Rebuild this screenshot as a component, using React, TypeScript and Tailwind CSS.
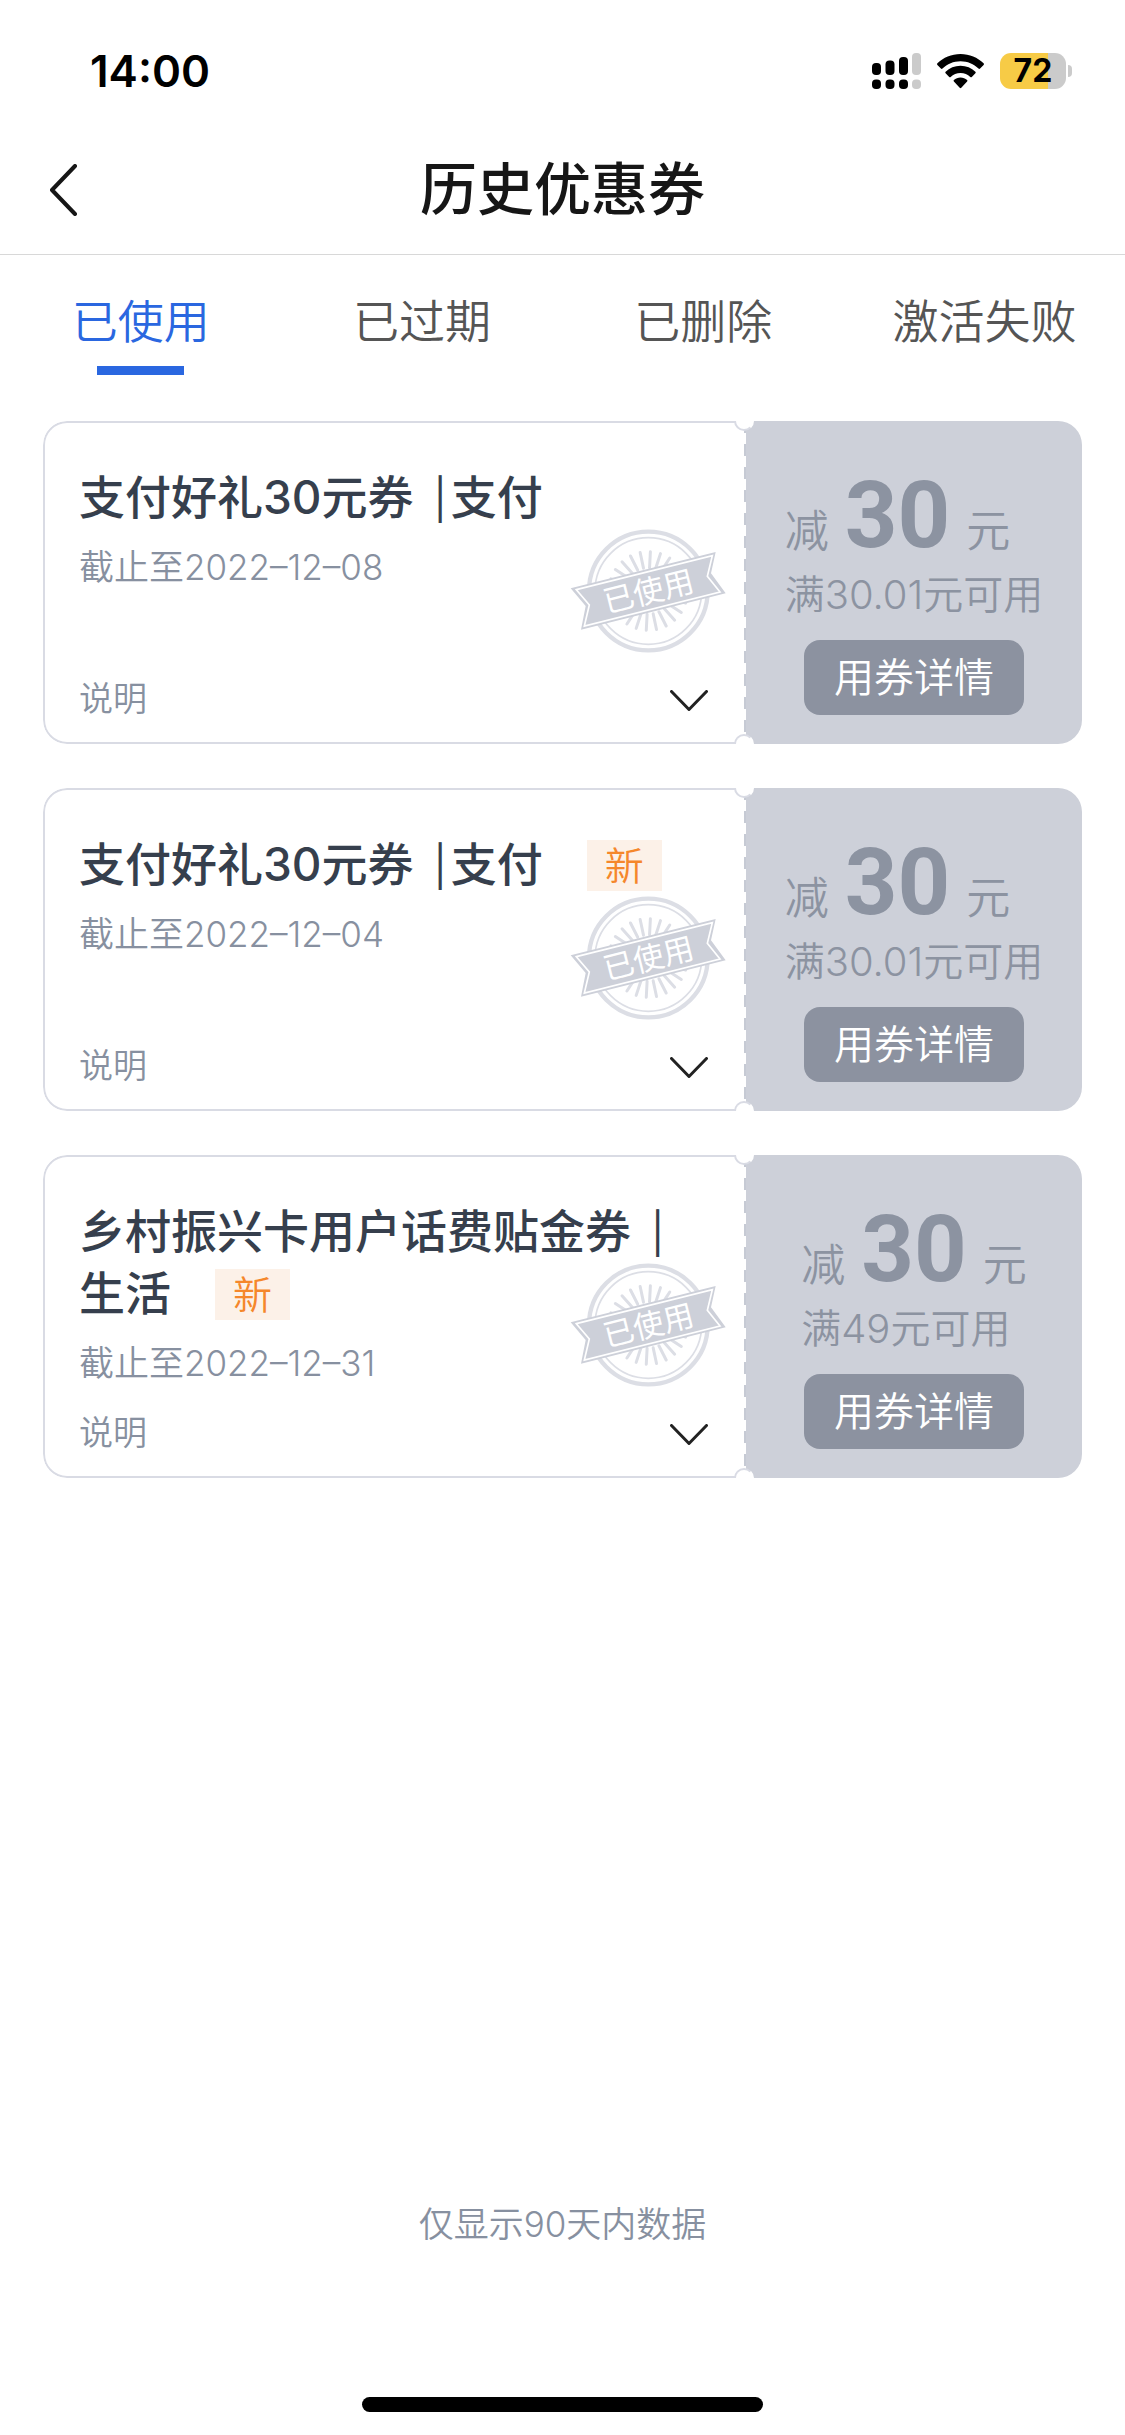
import { useState } from "react";

type Coupon = {
  id: number;
  title: string;
  category: string;
  isNew: boolean;
  expires: string;
  amount: string;
  condition: string;
};

const tabs = ["已使用", "已过期", "已删除", "激活失败"];

const coupons: Coupon[] = [
  { id: 1, title: "支付好礼30元券", category: "支付", isNew: false, expires: "2022–12–08", amount: "30", condition: "满30.01元可用" },
  { id: 2, title: "支付好礼30元券", category: "支付", isNew: true, expires: "2022–12–04", amount: "30", condition: "满30.01元可用" },
  { id: 3, title: "乡村振兴卡用户话费贴金券", category: "生活", isNew: true, expires: "2022–12–31", amount: "30", condition: "满49元可用" },
];

function StatusBar() {
  return (
    <div className="flex h-[142px] items-center justify-between pr-[53px] pl-[90px]">
      <span className="text-[44px] leading-none font-semibold text-black">14:00</span>
      <div className="flex items-center gap-4">
        <svg width="49" height="36" viewBox="0 0 49 36" aria-hidden="true">
          <rect x="0" y="10" width="9" height="12" rx="4" />
          <rect x="13.5" y="7.5" width="9" height="14.5" rx="4" />
          <rect x="27" y="4" width="9" height="18" rx="4" />
          <rect x="40" y="0" width="9" height="22" rx="4" fill="#cbcbcb" />
          <rect x="0" y="26.5" width="9" height="9.5" rx="4" />
          <rect x="13.5" y="26.5" width="9" height="9.5" rx="4" />
          <rect x="27" y="26.5" width="9" height="9.5" rx="4" />
          <rect x="40" y="26.5" width="9" height="9.5" rx="4" fill="#cbcbcb" />
        </svg>
        <svg width="47" height="35" viewBox="0 0 47 35" aria-hidden="true">
          <path d="M23.5 0C32.5 0 40.7 3.5 46.6 9.3c.5.5.5 1.1 0 1.6l-3.5 3.6c-.5.5-1.1.5-1.6 0C36.8 10 30.5 7.2 23.5 7.2S10.2 10 5.5 14.5c-.5.5-1.1.5-1.6 0L.4 10.9c-.5-.5-.5-1.1 0-1.6C6.3 3.5 14.5 0 23.5 0z" />
          <path d="M23.5 11.8c5.8 0 11 2.2 14.9 5.9.5.5.5 1.1 0 1.6l-3.6 3.6c-.5.5-1 .5-1.5 0-2.6-2.4-6-3.8-9.8-3.8s-7.2 1.4-9.8 3.8c-.5.5-1 .5-1.5 0l-3.6-3.6c-.5-.5-.5-1.1 0-1.6 3.9-3.7 9.1-5.9 14.9-5.9z" />
          <path d="M23.5 23.6c2.5 0 4.8.9 6.6 2.4.5.5.5 1.1 0 1.6l-5.8 6.2c-.5.5-1.1.5-1.6 0l-5.8-6.2c-.5-.5-.5-1.1 0-1.6 1.8-1.5 4.1-2.4 6.6-2.4z" />
        </svg>
        <div className="flex items-center gap-[2px]">
          <div className="flex h-9 w-[66px] items-center justify-center rounded-[11px] bg-linear-to-r from-[#f7cb46] from-72% to-[#cbcbcb] to-72% text-[32px] leading-none font-bold text-black">
            72
          </div>
          <div className="h-3 w-1 rounded-r-full bg-[#cbcbcb]" />
        </div>
      </div>
    </div>
  );
}

function UsedStamp() {
  const rays = Array.from({ length: 24 }, (_, i) => i * 15 + 3);
  return (
    <svg width="156" height="126" viewBox="90 85 468 378" aria-label="已使用" role="img">
      <circle cx="325" cy="274" r="178" fill="none" stroke="#dcdee5" strokeWidth="13" />
      <circle cx="325" cy="274" r="160" fill="none" stroke="#dcdee5" strokeWidth="5" />
      {rays.map((angle) => (
        <line
          key={angle}
          x1="325"
          y1="204"
          x2="325"
          y2="156"
          stroke="#dcdee5"
          strokeWidth="9"
          strokeLinecap="round"
          transform={`rotate(${angle} 325 274)`}
        />
      ))}
      <path d="M92 266 527 157 513 221 557 281 123 390 137 319z" fill="#cdd0d9" />
      <path d="M109 270 517 168 502 230 540 277 133 379 148 316z" fill="none" stroke="#fff" strokeWidth="5" />
      <text
        x="325"
        y="308"
        textAnchor="middle"
        fontSize="92"
        fill="#fff"
        transform="rotate(-14 325 274)"
      >
        已使用
      </text>
    </svg>
  );
}

function CouponCard({ coupon }: { coupon: Coupon }) {
  return (
    <li className="relative flex h-[323px] overflow-hidden rounded-3xl">
      <div className="relative flex flex-1 flex-col justify-between rounded-l-3xl border-2 border-r-0 border-[#d9dbe4] pt-[43px] pr-9 pb-[21px] pl-[34px]">
        <div>
          <h2 className="text-[46px] leading-[62px] font-medium text-[#363f4d]">
            {coupon.title}
            <span className="mr-1 ml-5 text-[40px] leading-none font-normal">|</span>
            <wbr />
            {coupon.category}
            {coupon.isNew && (
              <span className="mt-[7px] ml-11 inline-block bg-[#fcf1e8] px-[18px] align-top text-[39px] leading-[51px] font-[350] text-[#f5872b]">
                新
              </span>
            )}
          </h2>
          <p className="text-[35px] leading-[78px] font-[350] text-[#8790a0]">截止至{coupon.expires}</p>
        </div>
        <button className="flex items-end justify-between text-[34px] leading-[44px] font-[350] text-[#8790a0]">
          说明
          <svg className="mb-[9px]" width="38" height="22" viewBox="0 0 38 22" fill="none" stroke="#222" strokeWidth="3" strokeLinecap="round" strokeLinejoin="round" aria-hidden="true">
            <path d="M1.5 1.5 19 19.5 36.5 1.5" />
          </svg>
        </button>
        <div className="absolute top-[105px] right-[18px]">
          <UsedStamp />
        </div>
      </div>
      {/* perforation between the two halves */}
      <div className="w-[2px] bg-[repeating-linear-gradient(to_bottom,#c6cad4_0_12px,#ffffff_12px_23px)]" />
      <div className="flex w-[336px] flex-col items-center bg-[#cdd0d9] pt-[49px] text-[#8c93a1]">
        <div>
          <p className="flex items-baseline text-[44px] leading-[44px] font-[350]">
            减
            <span className="mx-4 font-[Roboto] text-[92px] leading-[92px] font-bold">{coupon.amount}</span>
            元
          </p>
          <p className="text-[40px] leading-[66px] font-[350]">{coupon.condition}</p>
        </div>
        <button className="mt-[12px] rounded-2xl bg-[#8c92a0] px-[30px] text-[40px] leading-[75px] font-[350] text-white">
          用券详情
        </button>
      </div>
      <span className="absolute -top-[10px] right-[328px] size-5 rounded-full border-2 border-[#d9dbe4] border-r-white bg-white" />
      <span className="absolute right-[328px] -bottom-[10px] size-5 rounded-full border-2 border-[#d9dbe4] border-r-white bg-white" />
    </li>
  );
}

export default function App() {
  const [active, setActive] = useState("已使用");

  return (
    <div className="flex min-h-screen flex-col bg-white font-[Inter,'Noto_Sans_CJK_SC',sans-serif]">
      <StatusBar />
      <header className="grid h-[113px] grid-cols-[1fr_auto_1fr] items-center border-b border-[#d8d8d8] px-12 pb-[17px]">
        <button aria-label="返回" className="justify-self-start">
          <svg width="30" height="52" viewBox="0 0 30 52" fill="none" stroke="#161616" strokeWidth="4" strokeLinecap="round" strokeLinejoin="round">
            <path d="M27 2 4 26 27 50" />
          </svg>
        </button>
        <h1 className="text-[57px] leading-none font-medium text-[#161616]">历史优惠券</h1>
      </header>

      <nav className="grid grid-cols-4">
        {tabs.map((tab) => (
          <button
            key={tab}
            onClick={() => setActive(tab)}
            className={`flex flex-col items-center gap-[13px] pt-[34px] text-[46px] leading-[64px] font-[350] whitespace-nowrap ${
              tab === active ? "text-[#2a67e0]" : "text-[#555]"
            }`}
          >
            {tab}
            <span className={`h-[9px] w-[87px] ${tab === active ? "bg-[#2a67e0]" : ""}`} />
          </button>
        ))}
      </nav>

      <ul className="mx-[43px] mt-[46px] flex flex-col gap-11">
        {coupons.map((coupon) => (
          <CouponCard key={coupon.id} coupon={coupon} />
        ))}
      </ul>

      <footer className="mt-auto flex flex-col items-center pb-[23px]">
        <p className="text-[35px] leading-[50px] font-[350] text-[#8790a0]">仅显示90天内数据</p>
        <div className="mt-[148px] h-[15px] w-[401px] rounded-full bg-black" />
      </footer>
    </div>
  );
}
